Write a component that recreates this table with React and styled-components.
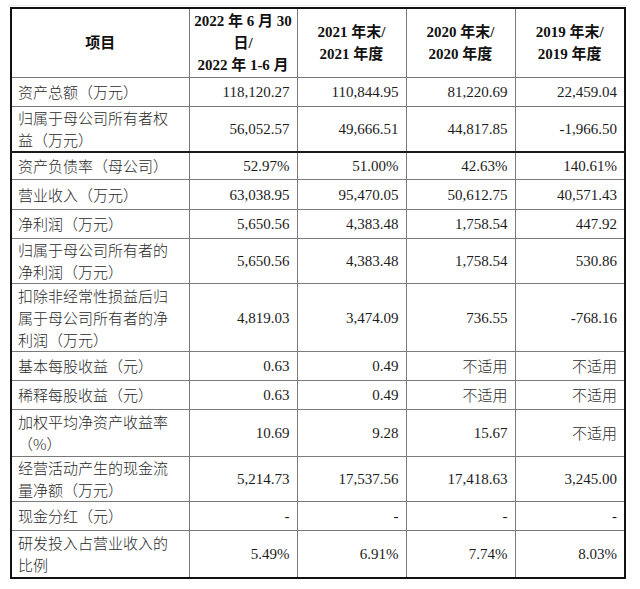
import styled, { createGlobalStyle } from "styled-components";

const GlobalStyle = createGlobalStyle`
  html, body {
    margin: 0;
    padding: 0;
    background: #ffffff;
  }
  body {
    font-family: "Liberation Serif", "Noto Sans CJK SC", serif;
    color: #1c1c1c;
  }
`;

const Page = styled.div`
  padding: 5px 0 0 8px;
`;

const Frame = styled.div`
  width: 617px;
  border-top: 1px solid #ececec;
  padding: 1px 0 0 2px;
`;

const Table = styled.table`
  border-collapse: collapse;
  table-layout: fixed;
  width: 614px;
  border: 2px solid #111;
  font-size: 15px;
  line-height: 22px;
`;

const Col = styled.col`
  width: ${(p) => p.$w}px;
`;

const Row = styled.tr`
  height: ${(p) => p.$h}px;
  border-bottom: ${(p) => (p.$thick ? "2px solid #1a1a1a" : "1px solid #7a7a7a")};
`;

const HeadCell = styled.th`
  border-right: 1px solid #7a7a7a;
  padding: 0 4px;
  font-weight: bold;
  text-align: center;
  vertical-align: middle;
  color: #111;
  &:last-child {
    border-right: none;
  }
`;

const LabelCell = styled.td`
  border-right: 1px solid #7a7a7a;
  padding: 0 4px 0 6px;
  text-align: left;
  vertical-align: middle;
  color: #2a2a2a;
  font-family: "Noto Sans CJK SC", "Liberation Serif", sans-serif;
  font-weight: 300;
  white-space: nowrap;
`;

const ValueCell = styled.td`
  border-right: 1px solid #7a7a7a;
  padding: 0 7px 0 4px;
  text-align: right;
  vertical-align: middle;
  white-space: nowrap;
  &:last-child {
    border-right: none;
  }
`;

const Cjk = styled.span`
  font-family: "Noto Sans CJK SC", sans-serif;
  font-weight: 300;
  color: #2a2a2a;
`;

const columns = [178, 108, 109, 109, 110];

const headers = [
  ["项目"],
  ["2022 年 6 月 30", "日/", "2022 年 1-6 月"],
  ["2021 年末/", "2021 年度"],
  ["2020 年末/", "2020 年度"],
  ["2019 年末/", "2019 年度"],
];

const rows = [
  { label: ["资产总额（万元）"], values: ["118,120.27", "110,844.95", "81,220.69", "22,459.04"], h: 29 },
  { label: ["归属于母公司所有者权", "益（万元）"], values: ["56,052.57", "49,666.51", "44,817.85", "-1,966.50"], h: 44, thick: true },
  { label: ["资产负债率（母公司）"], values: ["52.97%", "51.00%", "42.63%", "140.61%"], h: 28 },
  { label: ["营业收入（万元）"], values: ["63,038.95", "95,470.05", "50,612.75", "40,571.43"], h: 30 },
  { label: ["净利润（万元）"], values: ["5,650.56", "4,383.48", "1,758.54", "447.92"], h: 29 },
  { label: ["归属于母公司所有者的", "净利润（万元）"], values: ["5,650.56", "4,383.48", "1,758.54", "530.86"], h: 45 },
  { label: ["扣除非经常性损益后归", "属于母公司所有者的净", "利润（万元）"], values: ["4,819.03", "3,474.09", "736.55", "-768.16"], h: 68 },
  { label: ["基本每股收益（元）"], values: ["0.63", "0.49", "不适用", "不适用"], h: 29 },
  { label: ["稀释每股收益（元）"], values: ["0.63", "0.49", "不适用", "不适用"], h: 29 },
  { label: ["加权平均净资产收益率", "（%）"], values: ["10.69", "9.28", "15.67", "不适用"], h: 47 },
  { label: ["经营活动产生的现金流", "量净额（万元）"], values: ["5,214.73", "17,537.56", "17,418.63", "3,245.00"], h: 45 },
  { label: ["现金分红（元）"], values: ["-", "-", "-", "-"], h: 29 },
  { label: ["研发投入占营业收入的", "比例"], values: ["5.49%", "6.91%", "7.74%", "8.03%"], h: 47 },
];

function Lines({ lines }) {
  return lines.map((line, i) => (
    <span key={i}>
      {i > 0 && <br />}
      {line}
    </span>
  ));
}

function Value({ text }) {
  // "不适用" is set in the CJK face, figures stay in the serif
  if (/[\u4e00-\u9fa5]/.test(text)) return <Cjk>{text}</Cjk>;
  return text;
}

export default function App() {
  return (
    <>
      <GlobalStyle />
      <Page>
        <Frame>
          <Table>
            <colgroup>
              {columns.map((w, i) => (
                <Col key={i} $w={w} />
              ))}
            </colgroup>
            <thead>
              <Row $h={69}>
                {headers.map((h, i) => (
                  <HeadCell key={i}>
                    <Lines lines={h} />
                  </HeadCell>
                ))}
              </Row>
            </thead>
            <tbody>
              {rows.map((r, i) => (
                <Row key={i} $h={r.h} $thick={r.thick}>
                  <LabelCell>
                    <Lines lines={r.label} />
                  </LabelCell>
                  {r.values.map((v, j) => (
                    <ValueCell key={j}>
                      <Value text={v} />
                    </ValueCell>
                  ))}
                </Row>
              ))}
            </tbody>
          </Table>
        </Frame>
      </Page>
    </>
  );
}
